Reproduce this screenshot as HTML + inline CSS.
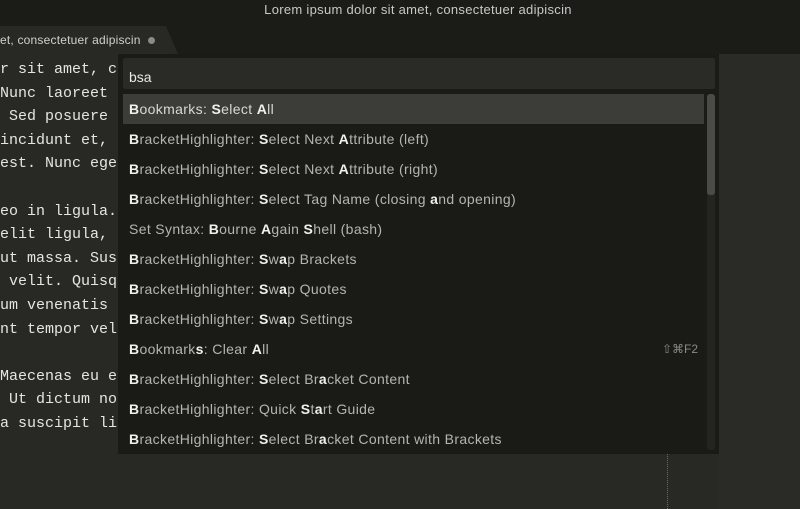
<!DOCTYPE html>
<html><head><meta charset="utf-8"><style>
*{margin:0;padding:0;box-sizing:border-box}
body{width:800px;height:509px;overflow:hidden;background:#282824;position:relative;font-family:"Liberation Sans",sans-serif}
.title{position:absolute;left:0;top:0;width:800px;height:26px;background:#1b1b18;color:#c8c8c4;font-size:13px;letter-spacing:0.3px;text-align:center;line-height:20px;padding-left:36px}
.tabbar{position:absolute;left:0;top:20px;width:800px;height:34px;background:#1b1b18}
.tab{position:absolute;left:0;top:6px;height:28px;width:178px;background:#282824;clip-path:polygon(0 0,166px 0,178px 28px,0 28px);color:#d0d0cc;font-size:12px;letter-spacing:0.2px;line-height:28px}
.tab span.dot{position:absolute;left:148px;top:11px;width:7px;height:7px;border-radius:50%;background:#8a8a86}
.code{position:absolute;left:0;top:58px;font-family:"Liberation Mono",monospace;font-size:15px;color:#e6e6e0;white-space:pre;line-height:23.6px}
.mini{position:absolute;left:719px;top:54px;width:81px;height:455px;background:#2a2a26}
.guide{position:absolute;left:667px;top:454px;height:55px;border-left:1px dotted #6a6a66}
.pal{position:absolute;left:118px;top:54px;width:601px;height:400px;background:#1a1a17}
.inp{position:absolute;left:5px;top:4px;width:592px;height:31px;background:#2a2a26;border-radius:2px;color:#e8e8e4;font-size:14px;line-height:31px;padding-left:6px;padding-top:4px}
.row{position:absolute;left:5px;width:581px;height:30px;color:#b4b4b0;font-size:14px;letter-spacing:0.35px;line-height:31px;padding-left:6px;white-space:nowrap}
.row b{color:#f0f0ec}
.sel{background:#3c3c38;color:#d8d8d4}
.sb{position:absolute;left:589px;top:40px;width:8px;height:356px;background:#242421;border-radius:3px}
.sb i{position:absolute;left:0;top:0;width:8px;height:101px;background:#4a4a47;border-radius:3px}
.key{position:absolute;right:6px;color:#8a8a86;font-size:12px;letter-spacing:0}
</style></head><body>
<div class="title">Lorem ipsum dolor sit amet, consectetuer adipiscin</div>
<div class="tabbar"><div class="tab">et, consectetuer adipiscin<span class="dot"></span></div></div>
<div class="code">r sit amet, c
Nunc laoreet
 Sed posuere
incidunt et,
est. Nunc ege

eo in ligula.
elit ligula,
ut massa. Sus
 velit. Quisq
um venenatis
nt tempor vel

Maecenas eu e
 Ut dictum no
a suscipit li</div>
<div class="mini"></div>
<div class="guide"></div>
<div class="pal">
<div class="inp">bsa</div>
<div class="row sel" style="top:40px"><b>B</b>ookmarks: <b>S</b>elect <b>A</b>ll</div>
<div class="row" style="top:70px"><b>B</b>racketHighlighter: <b>S</b>elect Next <b>A</b>ttribute (left)</div>
<div class="row" style="top:100px"><b>B</b>racketHighlighter: <b>S</b>elect Next <b>A</b>ttribute (right)</div>
<div class="row" style="top:130px"><b>B</b>racketHighlighter: <b>S</b>elect Tag Name (closing <b>a</b>nd opening)</div>
<div class="row" style="top:160px">Set Syntax: <b>B</b>ourne <b>A</b>gain <b>S</b>hell (bash)</div>
<div class="row" style="top:190px"><b>B</b>racketHighlighter: <b>S</b>w<b>a</b>p Brackets</div>
<div class="row" style="top:220px"><b>B</b>racketHighlighter: <b>S</b>w<b>a</b>p Quotes</div>
<div class="row" style="top:250px"><b>B</b>racketHighlighter: <b>S</b>w<b>a</b>p Settings</div>
<div class="row" style="top:280px"><b>B</b>ookmark<b>s</b>: Clear <b>A</b>ll<span class="key">⇧⌘F2</span></div>
<div class="row" style="top:310px"><b>B</b>racketHighlighter: <b>S</b>elect Br<b>a</b>cket Content</div>
<div class="row" style="top:340px"><b>B</b>racketHighlighter: Quick <b>S</b>t<b>a</b>rt Guide</div>
<div class="row" style="top:370px"><b>B</b>racketHighlighter: <b>S</b>elect Br<b>a</b>cket Content with Brackets</div>
<div class="sb"><i></i></div>
</div>
</body></html>
